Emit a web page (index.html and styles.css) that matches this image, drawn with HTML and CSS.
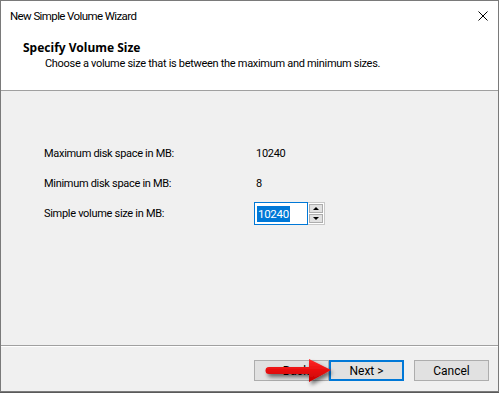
FILE: index.html
```html
<!DOCTYPE html>
<html lang="en">
<head>
  <meta charset="UTF-8" />
  <title>New Simple Volume Wizard</title>
  <link rel="stylesheet" href="styles.css">
</head>
<body>

<div class="window">
  <div class="titlebar">
    <span class="title">New Simple Volume Wizard</span>
    <svg class="close" width="10" height="10" viewBox="0 0 10 10">
      <path d="M0.5 0.5 L9.5 9.5 M9.5 0.5 L0.5 9.5" stroke="#000" stroke-width="1" fill="none"/>
    </svg>
  </div>

  <div class="header">
    <h1>Specify Volume Size</h1>
    <p>Choose a volume size that is between the maximum and minimum sizes.</p>
  </div>

  <div class="content">
    <div class="form">
      <div class="label">Maximum disk space in MB:</div>
      <div class="value">10240</div>

      <div class="label">Minimum disk space in MB:</div>
      <div class="value">8</div>

      <div class="label">Simple volume size in MB:</div>
      <div class="spin">
        <div class="input"><span class="selected">10240</span></div>
        <div class="spin-buttons">
          <div class="spin-btn"><span class="tri up"></span></div>
          <div class="spin-btn"><span class="tri down"></span></div>
        </div>
      </div>
    </div>
  </div>

  <div class="footer">
    <div class="pair">
      <button class="btn">&lt; Back</button>
      <button class="btn default">Next &gt;</button>
    </div>
    <button class="btn">Cancel</button>

    <svg class="arrow" width="80" height="36" viewBox="0 0 80 36">
      <defs>
        <filter id="shadow" x="-20%" y="-30%" width="150%" height="180%">
          <feGaussianBlur in="SourceAlpha" stdDeviation="2"/>
          <feOffset dx="2" dy="3" result="blur"/>
          <feComponentTransfer><feFuncA type="linear" slope="0.55"/></feComponentTransfer>
          <feMerge><feMergeNode/><feMergeNode in="SourceGraphic"/></feMerge>
        </filter>
        <linearGradient id="red" x1="0" y1="0" x2="0" y2="1">
          <stop offset="0" stop-color="#ff2a2a"/>
          <stop offset="0.5" stop-color="#e80e0e"/>
          <stop offset="1" stop-color="#c40000"/>
        </linearGradient>
      </defs>
      <path filter="url(#shadow)" fill="url(#red)"
            d="M10 12 L50 12 L50 4 L72 15 L50 27 L50 19 L10 19 A3.5 3.5 0 0 1 10 12 Z"/>
    </svg>
  </div>
</div>

</body>
</html>
```

FILE: styles.css
```css
* {
  box-sizing: border-box;
}

body {
  margin: 0;
  background-color: #5a5a5a;
  font-family: Roboto, "Liberation Sans", sans-serif;
  font-size: 11px;
  letter-spacing: -0.3px;
  color: #000;
}

.window {
  width: 499px;
  height: 392px;
  border: 1px solid #7a7a7a;
  background-color: #f0f0f0;
  display: flex;
  flex-direction: column;
}

.titlebar {
  height: 30px;
  background-color: #fff;
  display: flex;
  align-items: center;
  justify-content: space-between;
  padding: 0 10px 0 9px;
}

.title {
  font-size: 11.5px;
  letter-spacing: -0.6px;
  padding-bottom: 1px;
}

.close {
  display: block;
}

.header {
  height: 60px;
  background-color: #fff;
  border-bottom: 1px solid #a0a0a0;
  padding: 9px 0 0 22px;
}

.header h1 {
  margin: 0;
  font-family: "Noto Sans", sans-serif;
  font-size: 12px;
  font-weight: bold;
  line-height: 16px;
  letter-spacing: 0;
}

.header p {
  margin: 0;
  padding-left: 22px;
  line-height: 16px;
}

.content {
  flex: 1;
  border-bottom: 1px solid #a0a0a0;
  padding: 51px 0 0 43px;
}

.form {
  display: grid;
  grid-template-columns: 210px auto;
  grid-auto-rows: 23px;
  row-gap: 7px;
  align-items: center;
}

.value {
  padding-left: 2px;
}

.spin {
  display: flex;
  height: 23px;
}

.input {
  width: 54px;
  height: 23px;
  border: 1px solid #0078d7;
  background-color: #fff;
  padding: 3px 0 0 2px;
}

.selected {
  display: inline-block;
  background-color: #0078d7;
  color: #fff;
  font-size: 11.5px;
  line-height: 16px;
  padding: 0 1px;
}

.spin-buttons {
  width: 17px;
  height: 23px;
  border: 1px solid #c8c8c8;
  border-left: none;
  padding: 1px;
  display: flex;
  flex-direction: column;
  gap: 1px;
  background-color: #fff;
}

.spin-btn {
  flex: 1;
  background-color: #e1e1e1;
  border: 1px solid #adadad;
  display: flex;
  align-items: center;
  justify-content: center;
}

.tri {
  width: 0;
  height: 0;
  border-left: 3px solid transparent;
  border-right: 3px solid transparent;
}

.tri.up {
  border-bottom: 3px solid #000;
}

.tri.down {
  border-top: 3px solid #000;
}

.footer {
  position: relative;
  border-top: 1px solid #fff;
  flex: 0 0 45px;
  display: flex;
  justify-content: flex-end;
  align-items: flex-start;
  gap: 10px;
  padding: 13px 9px 0 0;
}

.pair {
  display: flex;
}

.btn {
  width: 75px;
  height: 21px;
  padding: 0;
  font-family: inherit;
  font-size: 12px;
  letter-spacing: 0;
  color: #000;
  background-color: #e1e1e1;
  border: 1px solid #adadad;
}

.btn.default {
  border: 2px solid #0078d7;
}

.arrow {
  position: absolute;
  left: 258px;
  top: 8px;
}
```
